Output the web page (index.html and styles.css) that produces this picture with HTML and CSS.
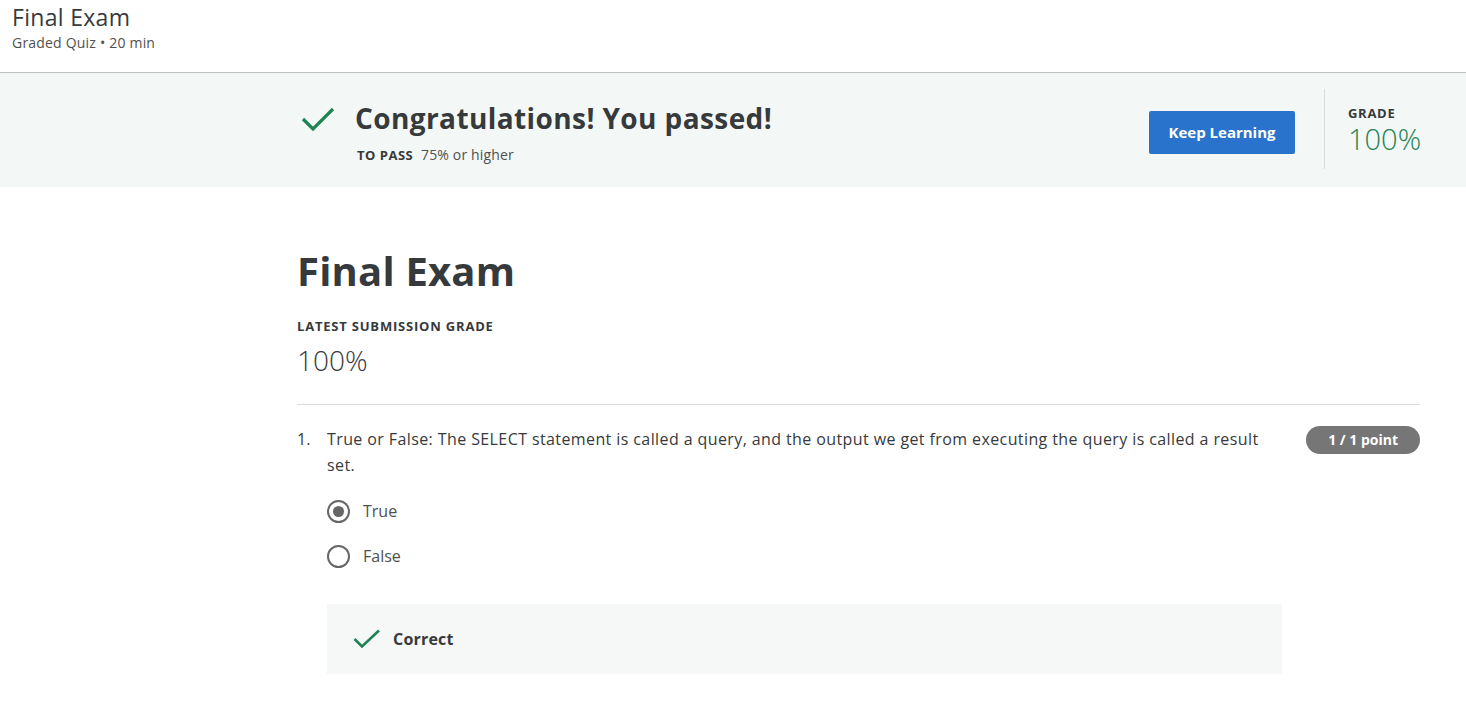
FILE: index.html
```html
<!DOCTYPE html>
<html>
<head>
<meta charset="utf-8">
<link rel="stylesheet" href="styles.css">
</head>
<body>
<header class="top">
  <div class="top-title">Final Exam</div>
  <div class="top-sub">Graded Quiz • 20 min</div>
</header>
<section class="banner">
  <div class="banner-inner">
    <div class="banner-left">
      <svg class="big-check" width="34" height="26" viewBox="0 0 34 26"><path d="M2 13 L12 23 L32 3" fill="none" stroke="#1f8354" stroke-width="3.2"/></svg>
      <div>
        <div class="congrats">Congratulations! You passed!</div>
        <div class="topass"><b>TO PASS</b> 75% or higher</div>
      </div>
    </div>
    <div class="banner-right">
      <button class="keep">Keep Learning</button>
      <div class="grade-box">
        <div class="grade-label">GRADE</div>
        <div class="grade-val">100%</div>
      </div>
    </div>
  </div>
</section>
<main class="content">
  <h1 class="exam-title">Final Exam</h1>
  <div class="latest-label">LATEST SUBMISSION GRADE</div>
  <div class="latest-val">100%</div>
  <div class="question">
    <div class="q-row">
      <div class="q-num">1.</div>
      <div class="q-text">True or False: The SELECT statement is called a query, and the output we get from executing the query is called a result set.</div>
      <div class="badge">1 / 1 point</div>
    </div>
    <div class="options">
      <div class="opt"><span class="radio checked"></span>True</div>
      <div class="opt"><span class="radio"></span>False</div>
    </div>
    <div class="feedback">
      <svg width="28" height="20" viewBox="0 0 28 20"><path d="M1.5 10 L9 17.5 L26 1.5" fill="none" stroke="#1f8354" stroke-width="2.6"/></svg>
      <span>Correct</span>
    </div>
  </div>
</main>
</body>
</html>
```
FILE: styles.css
```css
* { box-sizing: border-box; }
body {
  margin: 0;
  font-family: "Open Sans", "Noto Sans", sans-serif;
  color: #373a3c;
  background: #fff;
}
.top {
  height: 73px;
  border-bottom: 1px solid #bdbdbd;
  padding: 2px 12px 0;
}
.top-title {
  font-size: 23px;
  line-height: 30px;
  letter-spacing: 0.3px;
  color: #373a3c;
}
.top-sub {
  font-size: 14px;
  line-height: 22px;
  letter-spacing: 0.2px;
  color: #505050;
}
.banner {
  background: #f3f8f6;
  height: 114px;
}
.banner-inner {
  margin-left: 297px;
  width: 1123px;
  height: 100%;
  display: flex;
  justify-content: space-between;
  align-items: center;
}
.banner-left {
  display: flex;
  align-items: flex-start;
  gap: 20px;
  padding-left: 4px;
  margin-top: 3px;
}
.big-check { margin-top: 7px; }
.congrats {
  font-size: 28px;
  font-weight: 700;
  line-height: 38px;
  letter-spacing: 0.4px;
  color: #373a3c;
}
.topass {
  font-size: 14px;
  color: #505050;
  margin-top: 8px;
  margin-left: 2px;
  letter-spacing: 0.15px;
}
.topass b {
  font-size: 13px;
  font-weight: 700;
  letter-spacing: 0.5px;
  color: #373a3c;
  margin-right: 4px;
}
.banner-right {
  display: flex;
  align-items: center;
  height: 100%;
}
.keep {
  width: 146px;
  height: 43px;
  background: #2a73cc;
  color: #fff;
  border: none;
  border-radius: 2px;
  font-family: inherit;
  font-size: 15px;
  font-weight: 700;
  margin-right: 29px;
  margin-top: 4px;
}
.grade-box {
  border-left: 1px solid #dcdcdc;
  height: 80px;
  padding-left: 23px;
  width: 96px;
  margin-top: -2px;
}
.grade-label {
  font-size: 13px;
  font-weight: 700;
  letter-spacing: 0.7px;
  margin-top: 16px;
  line-height: 16px;
}
.grade-val {
  font-size: 29px;
  color: #1f8354;
  line-height: 30px;
  margin-top: 3px;
  font-weight: 300;
}
.content {
  margin-left: 297px;
  width: 1123px;
  padding-top: 56px;
}
.exam-title {
  margin: 0;
  font-size: 40px;
  font-weight: 700;
  line-height: 56px;
  letter-spacing: 0.2px;
  color: #373a3c;
}
.latest-label {
  font-size: 13px;
  font-weight: 700;
  letter-spacing: 0.8px;
  margin-top: 19px;
  line-height: 16px;
}
.latest-val {
  font-size: 28px;
  font-weight: 300;
  line-height: 38px;
  margin-top: 7px;
  padding-bottom: 25px;
  border-bottom: 1px solid #dcdcdc;
}
.question { padding-top: 21px; }
.q-row {
  display: flex;
  align-items: flex-start;
}
.q-num {
  width: 30px;
  font-size: 16px;
  line-height: 26px;
}
.q-text {
  flex: 1;
  font-size: 16px;
  line-height: 26px;
  letter-spacing: 0.4px;
  padding-right: 40px;
}
.badge {
  background: #767676;
  color: #fff;
  font-size: 14px;
  font-weight: 700;
  height: 28px;
  line-height: 28px;
  padding: 0 22px;
  border-radius: 14px;
  margin-top: 0;
  white-space: nowrap;
}
.options {
  margin-left: 30px;
  padding-top: 21px;
  display: flex;
  flex-direction: column;
  gap: 21px;
}
.opt {
  display: flex;
  align-items: center;
  font-size: 16px;
  line-height: 24px;
  color: #505050;
  gap: 13px;
}
.radio {
  width: 23px;
  height: 23px;
  border: 2px solid #666;
  border-radius: 50%;
  display: inline-flex;
  align-items: center;
  justify-content: center;
}
.radio.checked::after {
  content: "";
  width: 11px;
  height: 11px;
  border-radius: 50%;
  background: #666;
}
.feedback {
  margin-left: 30px;
  margin-top: 36px;
  width: 955px;
  height: 70px;
  background: #f5f8f7;
  display: flex;
  align-items: center;
  gap: 12px;
  padding-left: 26px;
  font-size: 16px;
  font-weight: 700;
  letter-spacing: 0.2px;
  color: #373a3c;
}
```
